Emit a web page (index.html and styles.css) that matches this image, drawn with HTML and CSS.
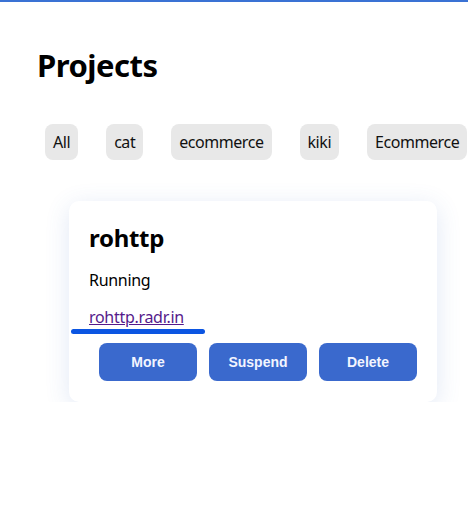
FILE: index.html
```html
<!DOCTYPE html>
<html>
<head>
<meta charset="utf-8">
<link rel="stylesheet" href="styles.css">
</head>
<body>
<div class="topbar"></div>
<main class="page">
  <h1 class="title">Projects</h1>
  <div class="chips">
    <span class="chip">All</span>
    <span class="chip">cat</span>
    <span class="chip">ecommerce</span>
    <span class="chip">kiki</span>
    <span class="chip">Ecommerce</span>
  </div>
  <section class="card">
    <h2 class="card-title">rohttp</h2>
    <p class="status">Running</p>
    <p class="link-row"><a class="link" href="#">rohttp.radr.in</a></p>
    <div class="focus-bar"></div>
    <div class="actions">
      <button class="btn">More</button>
      <button class="btn">Suspend</button>
      <button class="btn">Delete</button>
    </div>
  </section>
</main>
</body>
</html>
```
FILE: styles.css
```css
* { box-sizing: border-box; }
html, body { margin: 0; padding: 0; background: #fff; }
body {
  font-family: "Noto Sans", "Open Sans", sans-serif;
  color: #000;
  overflow: hidden;
}
.topbar {
  height: 2px;
  background: #3a72d4;
}
.page {
  padding: 0 0 0 37px;
}
.title {
  margin: 43px 0 0 0;
  font-size: 31px;
  line-height: 40px;
  font-weight: 700;
  letter-spacing: -0.5px;
}
.chips {
  display: flex;
  gap: 28px;
  margin: 39px 0 0 8px;
  white-space: nowrap;
}
.chip {
  flex: none;
  height: 36px;
  line-height: 37px;
  padding: 0 8px;
  background: #e8e8e8;
  border-radius: 8px;
  font-size: 16px;
  letter-spacing: -0.45px;
  color: #111;
}
.card {
  position: relative;
  width: 368px;
  height: 201px;
  margin: 41px 0 0 32px;
  padding: 22px 20px 21px 20px;
  background: #fff;
  border-radius: 10px;
  box-shadow: 0 5px 24px rgba(70, 110, 190, 0.16);
}
.card-title {
  margin: 0;
  font-size: 24px;
  line-height: 30px;
  font-weight: 700;
  letter-spacing: -0.3px;
}
.status {
  margin: 16px 0 0 0;
  font-size: 16px;
  line-height: 22px;
  letter-spacing: -0.3px;
}
.link-row {
  margin: 15px 0 0 0;
  font-size: 16px;
  line-height: 22px;
  letter-spacing: -0.3px;
}
.link { color: #551a8b; text-decoration: underline; }
.focus-bar {
  position: absolute;
  left: 2px;
  top: 128px;
  width: 134px;
  height: 5px;
  border-radius: 3px;
  background: #0b55e2;
}
.actions {
  display: flex;
  justify-content: flex-end;
  gap: 12px;
  margin-top: 15px;
}
.btn {
  width: 98px;
  height: 38px;
  border: none;
  border-radius: 8px;
  background: #3a69cd;
  color: #f2f5ff;
  font-family: "Liberation Sans", Arial, sans-serif;
  font-size: 14px;
  font-weight: 700;
  padding: 0;
}
```
